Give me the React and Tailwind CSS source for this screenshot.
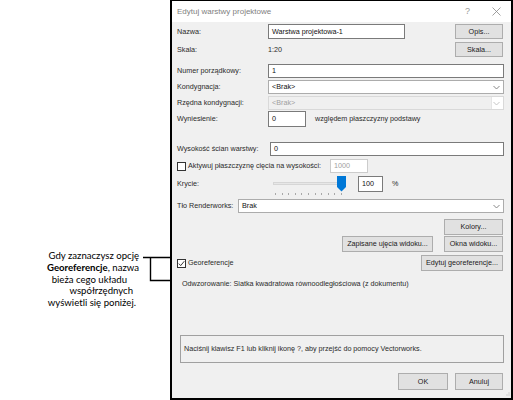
import React from 'react';

const font = "font-['Liberation_Sans',Arial,sans-serif]";

const Label = ({ w, children, className = '' }) => (
  <div className={`shrink-0 ${className}`} style={{ width: w }}>{children}</div>
);

const TextBox = ({ value, className = '', disabled }) => (
  <div
    className={`h-full border bg-white flex items-center pl-[3px] ${
      disabled ? 'border-[#cccccc] text-[#a0a0a0]' : 'border-[#7a7a7a] text-[#111111]'
    } ${className}`}
  >
    {value}
  </div>
);

const Chevron = ({ color = '#7a7a7a' }) => (
  <svg width="7" height="5" viewBox="0 0 7 5" className="mr-[3px]">
    <path d="M0.5 1 L3.5 4 L6.5 1" fill="none" stroke={color} strokeWidth="0.9" />
  </svg>
);

const Combo = ({ value, disabled }) => (
  <div
    className={`h-full flex-1 border flex items-center justify-between pl-[3px] ${
      disabled ? 'border-[#d9d9d9] bg-[#f0f0f0] text-[#a0a0a0]' : 'border-[#acacac] bg-white text-[#111111]'
    }`}
  >
    <span>{value}</span>
    {disabled ? (
      <div className="w-[12px] h-full bg-white border-l border-[#e5e5e5] flex items-center justify-center">
        <Chevron color="#bfbfbf" />
      </div>
    ) : (
      <Chevron />
    )}
  </div>
);

const Button = ({ children, className = '' }) => (
  <div
    className={`h-full border border-[#adadad] bg-[#e1e1e1] flex items-center justify-center text-[#1a1a1a] ${className}`}
  >
    {children}
  </div>
);

const CheckBox = ({ checked }) => (
  <div className="w-[9px] h-[9px] border border-[#333333] bg-white shrink-0 flex items-center justify-center">
    {checked && (
      <svg width="7" height="7" viewBox="0 0 7 7">
        <path d="M0.8 3.6 L2.7 5.6 L6.3 1.2" fill="none" stroke="#222" strokeWidth="0.9" />
      </svg>
    )}
  </div>
);

const Slider = () => (
  <div className="relative w-[74px] h-full">
    <div className="absolute left-[1px] right-[2px] top-[6px] h-[3px] bg-[#e7e7e7] border border-[#d6d6d6]" />
    <svg className="absolute right-0 top-0" width="9" height="16" viewBox="0 0 9 16">
      <path d="M0 0 H9 V11 L4.5 15.5 L0 11 Z" fill="#0078d7" />
    </svg>
    <div className="absolute left-[3px] right-[4px] top-[17px] flex justify-between">
      {Array.from({ length: 11 }).map((_, i) => (
        <div key={i} className="w-px h-[2px] bg-[#a8a8a8]" />
      ))}
    </div>
  </div>
);

export default function App() {
  return (
    <div className={`w-[513px] h-[400px] bg-white flex overflow-hidden text-[7.2px] leading-none ${font}`}>
      {/* annotation */}
      <div className="relative w-[170px] h-full shrink-0">
        <div className="absolute right-[31px] top-[250px] text-right text-[9.6px] leading-[11.8px] text-black font-['Lato','Open_Sans',sans-serif]">
          <div>Gdy zaznaczysz opcję</div>
          <div><span className="font-bold">Georeferencje</span>, nazwa</div>
          <div className="pr-[12px]">bieża cego układu</div>
          <div className="pr-[6px]">współrzędnych</div>
          <div className="pr-[3px]">wyświetli się poniżej.</div>
        </div>
        <svg className="absolute left-[140px] top-[252px]" width="30" height="32" viewBox="0 0 30 32">
          <path d="M3 5.5 H30 M10.5 5.5 V28.5 H30" fill="none" stroke="#000" strokeWidth="1.4" />
        </svg>
      </div>

      {/* dialog */}
      <div className="relative w-[343px] h-full border-t border-l-2 border-r-2 border-b-2 border-black bg-[#f0f0f0] flex flex-col text-[#2a2a2a]">
        <div className="h-[21px] bg-white flex items-center pl-[5px] pr-[10px] text-[#808080] text-[8px]">
          <span>Edytuj warstwy projektowe</span>
          <span className="ml-auto mr-[22px] text-[#999999] text-[9px]">?</span>
          <svg width="9" height="9" viewBox="0 0 9 9">
            <path d="M0.5 0.5 L8.5 8.5 M8.5 0.5 L0.5 8.5" stroke="#888" strokeWidth="0.8" />
          </svg>
        </div>

        <div className="flex-1 flex flex-col pl-[5px] pr-[7px]">
          {/* Nazwa */}
          <div className="mt-[2px] h-[15px] flex items-center">
            <Label w={91}>Nazwa:</Label>
            <TextBox value="Warstwa projektowa-1" className="w-[137px]" />
            <Button className="ml-auto w-[48px] mr-px">Opis...</Button>
          </div>
          {/* Skala */}
          <div className="mt-[3px] h-[15px] flex items-center">
            <Label w={91}>Skala:</Label>
            <span>1:20</span>
            <Button className="ml-auto w-[48px] mr-px">Skala...</Button>
          </div>
          {/* Numer */}
          <div className="mt-[7px] h-[14px] flex items-center">
            <Label w={91}>Numer porządkowy:</Label>
            <TextBox value="1" className="flex-1" />
          </div>
          <div className="mt-[2px] h-[14px] flex items-center">
            <Label w={91}>Kondygnacja:</Label>
            <Combo value="<Brak>" />
          </div>
          <div className="mt-[2px] h-[14px] flex items-center">
            <Label w={91}>Rzędna kondygnacji:</Label>
            <Combo value="<Brak>" disabled />
          </div>
          <div className="mt-[1px] h-[16px] flex items-center">
            <Label w={91}>Wyniesienie:</Label>
            <TextBox value="0" className="w-[38px]" />
            <span className="ml-[9px]">względem płaszczyzny podstawy</span>
          </div>
          {/* Wysokosc */}
          <div className="mt-[15px] h-[14px] flex items-center">
            <Label w={93}>Wysokość ścian warstwy:</Label>
            <TextBox value="0" className="flex-1" />
          </div>
          <div className="mt-[3px] h-[14px] flex items-center">
            <div className="w-[153px] shrink-0 flex items-center">
              <CheckBox />
              <span className="ml-[2px]">Aktywuj płaszczyznę cięcia na wysokości:</span>
            </div>
            <TextBox value="1000" disabled className="w-[38px]" />
          </div>
          <div className="mt-[3px] h-[16px] flex items-start">
            <Label w={95} className="self-center">Krycie:</Label>
            <Slider />
            <TextBox value="100" className="ml-[12px] w-[25px]" />
            <span className="ml-[9px] self-center">%</span>
          </div>
          {/* Tlo */}
          <div className="mt-[7px] h-[14px] flex items-center">
            <Label w={61}>Tło Renderworks:</Label>
            <Combo value="Brak" />
          </div>
          <div className="mt-[6px] h-[16px] flex items-center justify-end">
            <Button className="w-[59px] mr-px">Kolory...</Button>
          </div>
          <div className="mt-px h-[16px] flex items-center justify-end">
            <Button className="w-[91px]">Zapisane ujęcia widoku...</Button>
            <Button className="ml-[11px] w-[59px] mr-px">Okna widoku...</Button>
          </div>
          <div className="mt-[3px] h-[16px] flex items-center">
            <CheckBox checked />
            <span className="ml-[2px]">Georeferencje</span>
            <Button className="ml-auto w-[82px] mr-px">Edytuj georeferencje...</Button>
          </div>
          <div className="mt-[8px] h-[10px] flex items-center pl-[5px]">
            Odwzorowanie: Siatka kwadratowa równoodległościowa (z dokumentu)
          </div>
          {/* help */}
          <div className="mt-[46px] ml-[3px] h-[28px] border border-[#a0a0a0] flex items-center pl-[3px]">
            Naciśnij klawisz F1 lub kliknij ikonę ?, aby przejść do pomocy Vectorworks.
          </div>
          <div className="mt-[10px] h-[17px] flex items-center justify-end">
            <Button className="w-[50px]">OK</Button>
            <Button className="ml-[7px] w-[48px] mr-px">Anuluj</Button>
          </div>
        </div>
        <svg className="absolute right-[1px] bottom-[1px]" width="5" height="5" viewBox="0 0 5 5">
          <rect x="3.5" y="0.5" width="1" height="1" fill="#b0b0b0" />
          <rect x="1.5" y="2.5" width="1" height="1" fill="#b0b0b0" />
          <rect x="3.5" y="2.5" width="1" height="1" fill="#b0b0b0" />
        </svg>
      </div>
    </div>
  );
}
